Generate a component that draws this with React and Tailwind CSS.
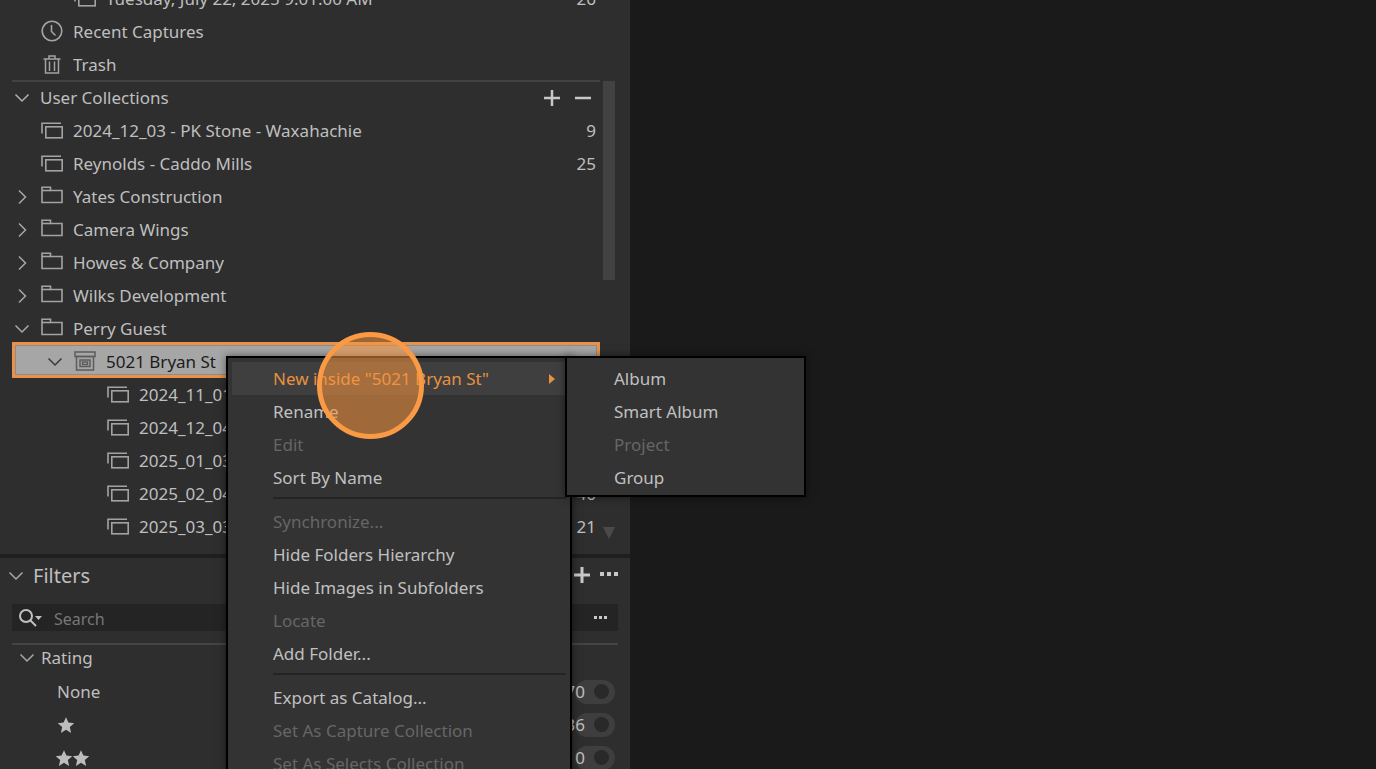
import React from "react";

const Chevron = ({ dir = "down", className = "" }) => (
  <svg width="16" height="16" viewBox="0 0 16 16" fill="none" stroke="currentColor" strokeWidth="1.5" className={className}>
    {dir === "down" ? <path d="M1.5 4.5 8 11 14.5 4.5" /> : <path d="M5 1.5 11.5 8 5 14.5" />}
  </svg>
);

const CollectionIcon = () => (
  <svg width="22" height="18" viewBox="0 0 22 18" fill="none" stroke="#a3a3a3" strokeWidth="1.6">
    <path d="M1 11.5V1.2H20" />
    <rect x="4.8" y="4.8" width="16.4" height="11" />
  </svg>
);

const FolderIcon = () => (
  <svg width="22" height="18" viewBox="0 0 22 18" fill="none" stroke="#a3a3a3" strokeWidth="1.6" className="-mt-[3px]">
    <path d="M1 16.5V1.2H9.5V4.5H21V16.5Z" />
    <path d="M1 4.5H9.5" />
  </svg>
);

const BoxIcon = () => (
  <svg width="22" height="20" viewBox="0 0 22 20" fill="none" stroke="#5c5c5c" strokeWidth="1.5" className="-mt-[1px]">
    <rect x="1" y="1" width="20" height="4.5" />
    <rect x="2.5" y="5.5" width="17" height="13.5" />
    <rect x="6" y="9" width="10" height="6.5" />
    <rect x="8.5" y="11" width="5" height="2.5" />
  </svg>
);

const ClockIcon = () => (
  <svg width="22" height="22" viewBox="0 0 22 22" fill="none" stroke="#a3a3a3" strokeWidth="1.6" className="-mt-[2px]">
    <circle cx="11" cy="11" r="9.8" />
    <path d="M10.5 5V11.5L14.5 15.5" />
  </svg>
);

const TrashIcon = () => (
  <svg width="18" height="19" viewBox="0 0 18 19" fill="none" stroke="#a3a3a3" strokeWidth="1.5">
    <path d="M0.5 4H17.5M6 4V1H12V4" />
    <path d="M2.5 4V18H15.5V4M6.5 6.5V16M11.5 6.5V16" />
  </svg>
);

const Star = () => (
  <svg width="18" height="18" viewBox="0 0 24 24" fill="#bdbdbd">
    <path d="M12 1.5l3.2 7.2 7.8.8-5.9 5.2 1.7 7.8L12 18.4l-6.8 4.1 1.7-7.8L1 9.5l7.8-.8z" />
  </svg>
);

const Row = ({ level = 0, chevron, icon, label, count, selected }) => (
  <div
    className={
      selected
        ? "flex items-center h-[36px] -mt-[3px] pt-[3px] border-[3px] border-[#e8924a] bg-[#a6a6a6] text-[#1c1c1c] shadow-[inset_0_0_0_1px_#8c8c8c] relative"
        : "flex items-center h-[33px]"
    }
  >
    {level === 1 && <div className={selected ? "w-[30px] shrink-0" : "w-[33px] shrink-0"} />}
    {level === 2 && <div className="w-[66px] shrink-0" />}
    <div className="w-[29px] shrink-0 flex pl-[2px]">
      {chevron && <Chevron dir={chevron} className={selected ? "text-[#3a3a3a]" : "text-[#a8a8a8]"} />}
    </div>
    <div className="w-[32px] shrink-0 flex items-center">{icon}</div>
    <span className="flex-1 whitespace-nowrap overflow-hidden">{label}</span>
    {count !== undefined && <span className="pr-[4px]">{count}</span>}
  </div>
);

const MenuItem = ({ children, disabled, active, arrow }) => (
  <div
    className={`flex items-center justify-between h-[33px] pr-[11px] ${active ? "bg-[#3f3f3f] text-[#e8923f]" : disabled ? "text-[#666666]" : "text-[#c0c0c0]"}`}
  >
    <span className="whitespace-nowrap">{children}</span>
    {arrow && <span className="w-0 h-0 border-y-[5px] border-y-transparent border-l-[6px] border-l-[#e8923f]" />}
  </div>
);

const MenuSeparator = () => (
  <div className="h-[11px] pt-[3px] pl-[41px]"><div className="h-[2px] w-full bg-[#242424]" /></div>
);

const FilterRow = ({ label, count }) => (
  <div className="flex items-center h-[33px] pl-[45px] pr-[3px]">
    <div className="flex-1 flex items-center">{label}</div>
    <span className="relative -mr-[10px]">{count}</span>
    <div className="w-[40px] h-[24px] rounded-full bg-[#3e3e3e] flex items-center justify-end pr-[6px]">
      <div className="w-[15px] h-[15px] rounded-full bg-[#292929]" />
    </div>
  </div>
);

export default function App() {
  return (
    <div className="relative flex w-[1376px] h-[769px] overflow-hidden bg-[#1a1a1a] text-[#bfbfbf] text-[17px] font-['Noto_Sans',sans-serif]">
      <aside className="w-[630px] h-full shrink-0 flex flex-col bg-[#2e2e2e]">
        <div className="h-[554px] shrink-0 overflow-hidden">
          <div className="-mt-[18px] pl-[12px] pr-[30px]">
            <Row level={1} icon={<CollectionIcon />} label="Tuesday, July 22, 2025 9:01:00 AM" count="26" />
            <div className="-ml-[33px]">
              <Row level={1} icon={<ClockIcon />} label="Recent Captures" />
            </div>
            <div className="h-[32px]">
              <Row icon={<span className="ml-[2px]"><TrashIcon /></span>} label="Trash" />
            </div>
          </div>
          <div className="flex h-[474px] pl-[12px]">
            <div className="w-[588px] shrink-0">
              <div className="h-[2px] bg-[#424242]" />
              <div className="flex items-center h-[32px] pb-[1px] pr-[9px]">
                <div className="w-[28px] flex pl-[2px]"><Chevron className="text-[#b0b0b0]" /></div>
                <span className="flex-1">User Collections</span>
                <svg width="16" height="16" viewBox="0 0 16 16" stroke="#c8c8c8" strokeWidth="2.5">
                  <path d="M0 8H16M8 0V16" />
                </svg>
                <svg width="16" height="16" viewBox="0 0 16 16" stroke="#c8c8c8" strokeWidth="2.5" className="ml-[15px]">
                  <path d="M0 8H16" />
                </svg>
              </div>
              <Row icon={<CollectionIcon />} label="2024_12_03 - PK Stone - Waxahachie" count="9" />
              <Row icon={<CollectionIcon />} label="Reynolds - Caddo Mills" count="25" />
              <Row chevron="right" icon={<FolderIcon />} label="Yates Construction" />
              <Row chevron="right" icon={<FolderIcon />} label="Camera Wings" />
              <Row chevron="right" icon={<FolderIcon />} label="Howes & Company" />
              <Row chevron="right" icon={<FolderIcon />} label="Wilks Development" />
              <Row chevron="down" icon={<FolderIcon />} label="Perry Guest" />
              <Row selected level={1} chevron="down" icon={<BoxIcon />} label="5021 Bryan St" />
              <Row level={2} icon={<CollectionIcon />} label="2024_11_01" />
              <Row level={2} icon={<CollectionIcon />} label="2024_12_04" />
              <Row level={2} icon={<CollectionIcon />} label="2025_01_03" />
              <Row level={2} icon={<CollectionIcon />} label="2025_02_04" count="46" />
              <Row level={2} icon={<CollectionIcon />} label="2025_03_03" count="21" />
            </div>
            <div className="w-[12px] ml-[3px] flex flex-col pt-[1px] pb-[15px]">
              <div className="h-[199px] bg-[#424242]" />
              <div className="mt-auto w-0 h-0 border-x-[6px] border-x-transparent border-t-[12px] border-t-[#4a4a4a]" />
            </div>
          </div>
        </div>
        <div className="h-[4px] shrink-0 bg-[#1f1f1f]" />
        <div className="flex-1 overflow-hidden px-[12px]">
          <div className="flex items-center h-[34px] mt-[1px]">
            <Chevron className="text-[#a8a8a8] -ml-[4px] mr-[9px]" />
            <span className="flex-1 text-[20px] pb-[1px]">Filters</span>
            <svg width="16" height="16" viewBox="0 0 16 16" stroke="#c8c8c8" strokeWidth="3" className="-mt-[2px]">
              <path d="M0 8H16M8 0V16" />
            </svg>
            <span className="ml-[10px] flex gap-[3px] -mt-[4px]">
              <i className="w-[4px] h-[4px] bg-[#c8c8c8]" /><i className="w-[4px] h-[4px] bg-[#c8c8c8]" /><i className="w-[4px] h-[4px] bg-[#c8c8c8]" />
            </span>
          </div>
          <div className="flex items-center h-[27px] mt-[11px] bg-[#242424] pl-[6px] pr-[11px]">
            <svg width="24" height="20" viewBox="0 0 24 20" fill="none" stroke="#c0c0c0" strokeWidth="2">
              <circle cx="8" cy="8" r="6" />
              <path d="M12.5 12.5 18 18" />
              <path d="M17 8H24L20.5 12Z" fill="#c0c0c0" stroke="none" />
            </svg>
            <span className="flex-1 ml-[12px] pt-[2px] text-[16px] text-[#777777]">Search</span>
            <span className="flex gap-[2px]">
              <i className="w-[3px] h-[3px] bg-[#c8c8c8]" /><i className="w-[3px] h-[3px] bg-[#c8c8c8]" /><i className="w-[3px] h-[3px] bg-[#c8c8c8]" />
            </span>
          </div>
          <div className="h-[2px] mt-[12px] bg-[#444444]" />
          <div className="flex items-center h-[29px] pb-[3px]">
            <Chevron className="text-[#a8a8a8] ml-[7px] mr-[6px]" />
            <span>Rating</span>
          </div>
          <div className="mt-[1px]">
            <FilterRow label="None" count="70" />
            <FilterRow label={<Star />} count="36" />
            <FilterRow label={<span className="flex -space-x-[1px] -ml-[2px]"><Star /><Star /></span>} count="0" />
          </div>
        </div>
      </aside>
      <main className="flex-1" />

      <div className="absolute left-[226px] top-[356px] w-[346px] h-[430px] border-2 border-black bg-[#333333] pt-[4px] pl-[4px] pr-[4px] shadow-[0_0_8px_rgba(0,0,0,0.5)]">
        <div className="[&>*]:pl-[41px]">
          <MenuItem active arrow>New inside "5021 Bryan St"</MenuItem>
          <MenuItem>Rename</MenuItem>
          <MenuItem disabled>Edit</MenuItem>
          <MenuItem>Sort By Name</MenuItem>
        </div>
        <MenuSeparator />
        <div className="[&>*]:pl-[41px]">
          <MenuItem disabled>Synchronize...</MenuItem>
          <MenuItem>Hide Folders Hierarchy</MenuItem>
          <MenuItem>Hide Images in Subfolders</MenuItem>
          <MenuItem disabled>Locate</MenuItem>
          <MenuItem>Add Folder...</MenuItem>
        </div>
        <MenuSeparator />
        <div className="[&>*]:pl-[41px]">
          <MenuItem>Export as Catalog...</MenuItem>
          <MenuItem disabled>Set As Capture Collection</MenuItem>
          <MenuItem disabled>Set As Selects Collection</MenuItem>
        </div>
      </div>

      <div className="absolute left-[565px] top-[356px] w-[241px] h-[141px] border-2 border-black bg-[#333333] pt-[4px] pl-[47px] shadow-[0_0_8px_rgba(0,0,0,0.5)]">
        <MenuItem>Album</MenuItem>
        <MenuItem>Smart Album</MenuItem>
        <MenuItem disabled>Project</MenuItem>
        <MenuItem>Group</MenuItem>
      </div>

      <div className="absolute left-[317px] top-[332px] w-[107px] h-[107px] rounded-full border-[5px] border-[#fb9a45] bg-[#f79640]/55" />
    </div>
  );
}
